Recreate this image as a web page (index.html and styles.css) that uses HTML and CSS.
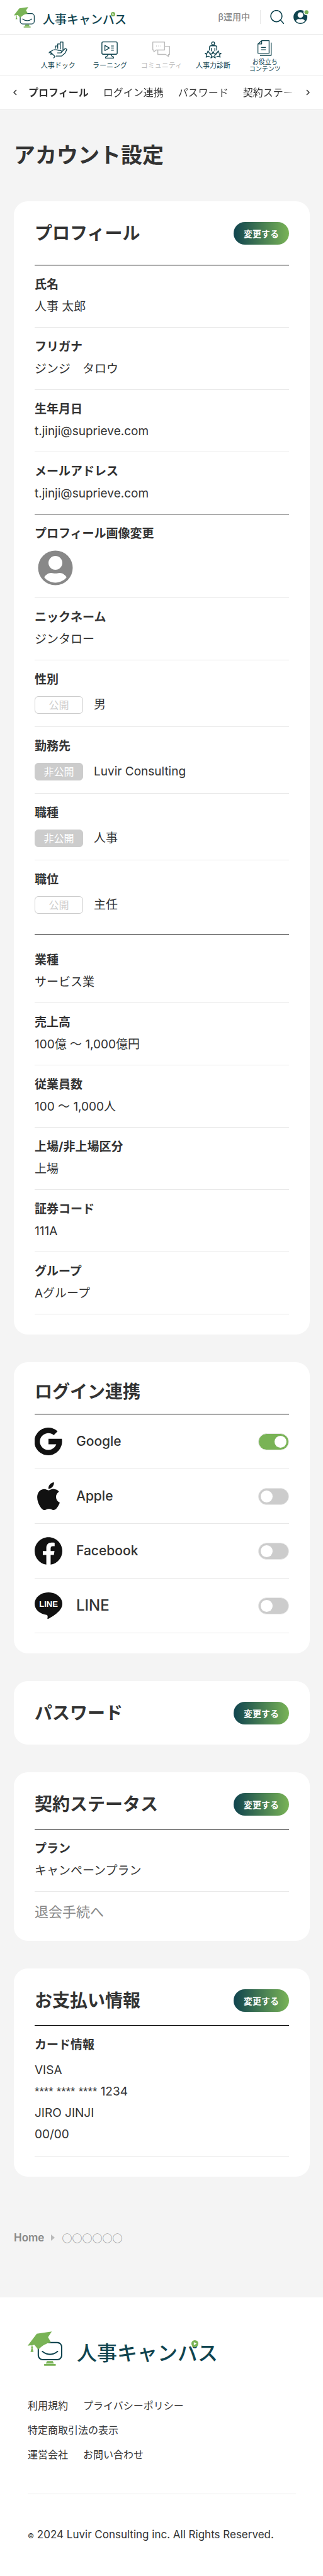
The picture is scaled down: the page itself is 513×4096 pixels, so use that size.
FILE: index.html
```html
<!DOCTYPE html>
<html lang="ja">
<head>
    <meta charset="UTF-8">
    <meta name="viewport" content="width=device-width, initial-scale=1.0">
    <title>アカウント設定 | 人事キャンパス</title>
    <link rel="stylesheet" href="styles.css">
</head>
<body>
    <svg class="defs" aria-hidden="true">
        <symbol id="logo-mark" viewBox="0 0 80 80">
            <rect x="24.5" y="26" width="54" height="39.5" rx="10" fill="none" stroke="#10444f" stroke-width="3"/>
            <path d="M34 46.5Q51.500 60 69 46.500" fill="none" stroke="#10444f" stroke-width="3" stroke-linecap="round"/>
            <path d="M0 33L21 5.300L55.600.500L47 13.300L53.500 25Q37 29 24.500 42L15.400 31.400Z" fill="#79b356"/>
            <path d="M10 31V36" stroke="#79b356" stroke-width="1.500"/>
            <circle cx="10" cy="37" r="2" fill="#79b356"/>
            <path d="M9 38.500H11L13.500 47.500H6.500Z" fill="#79b356"/>
            <path d="M44.600 68.600H58L60.400 74.500H41.700Z" fill="#79b356"/>
            <rect x="37.400" y="75.800" width="27.800" height="3.700" rx="1.800" fill="#79b356"/>
        </symbol>
        <symbol id="play-dot" viewBox="0 0 16 16">
            <circle cx="8" cy="8" r="8" fill="#79b356"/>
            <path d="M5.500 4.500L12 8L5.500 11.500Z" fill="#fff"/>
        </symbol>
        <symbol id="person" viewBox="0 0 24 24">
            <path fill-rule="evenodd" d="M12 2a10 10 0 1 0 0 20a10 10 0 1 0 0-20zM12 5.100a4 4 0 1 1 0 8a4 4 0 1 1 0-8zM5.500 17.400c1-1.500 2.400-2.500 4-2.500c1 0 1.500.300 2.500.300s1.500-.300 2.500-.300c1.600 0 3 1 4 2.500c-1.500 2-3.900 3.100-6.500 3.100s-5-1.100-6.500-3.100z"/>
        </symbol>
    </svg>

    <header class="header">
        <a class="logo" href="#">
            <svg class="logo-mark"><use href="#logo-mark"/></svg>
            <span class="logo-text">人事キャン<span class="logo-pa">パ<svg class="play-dot"><use href="#play-dot"/></svg></span>ス</span>
        </a>
        <div class="header-tools">
            <span class="beta">β運用中</span>
            <button class="icon-btn search-btn" type="button" aria-label="検索">
                <svg viewBox="0 0 32 32" width="22" height="22"><circle cx="14.500" cy="14" r="13" fill="none" stroke="#10444f" stroke-width="2.400"/><path d="M24 23L31 31" stroke="#10444f" stroke-width="2.400" stroke-linecap="round"/></svg>
            </button>
            <button class="icon-btn" type="button" aria-label="アカウント">
                <svg viewBox="0 0 36 32" width="25" height="22">
                    <path fill="#10444f" fill-rule="evenodd" d="M16 0a16 16 0 1 0 0 32a16 16 0 1 0 0-32zM16 5a6.500 6.500 0 1 1 0 13a6.500 6.500 0 1 1 0-13zM5.500 25c2-3 4-4.300 6.500-4.300c2 0 2.500.600 4 .600s2-.600 4-.600c2.500 0 4.500 1.300 6.500 4.300a14 14 0 0 1-21 0z"/>
                    <circle cx="30" cy="5" r="7" fill="#fff"/>
                    <circle cx="30" cy="5" r="4.600" fill="#79b356"/>
                </svg>
            </button>
        </div>
    </header>

    <nav class="main-nav">
        <a class="nav-item" href="#">
            <svg viewBox="0 0 45 40" width="30" height="27"><path d="M16.500 17V10.500H22V5.500H28V1H34.500V21M22 10V17M28 5.500V18M1 27.500C2 25 4 23 7 22.500C10 20 13 18.800 16 19C20 19 23 21 27 21C31 21 32 23.500 31.500 25C31 27 29 27 27 27H21M31.500 24.500L38 18C40 16 44 17 43.500 19.500L39 28L31 34.500H18M3.500 24L15.500 35.500L12 39.500"/><circle cx="6" cy="29.500" r=".8"/></svg>
            <span>人事ドック</span>
        </a>
        <a class="nav-item" href="#">
            <svg viewBox="0 0 38 40" width="26" height="27"><rect x="1" y="1" width="36" height="29" rx="3"/><path d="M8 9L18.500 15.300L8 21.500ZM22.500 10.500H29M22.500 15.300H29M22.500 20.500H29M15.500 30.500C15.500 34 14 35 9.500 36.500V39H28.500V36.500C24 35 22.500 34 22.500 30.500"/></svg>
            <span>ラーニング</span>
        </a>
        <a class="nav-item disabled" href="#">
            <svg viewBox="0 0 42 40" width="28" height="27"><path d="M3 20H1V1H29V20H9L3.500 24.500V20ZM29 11.500H41V30.500H38.500V35.500L31.500 30.500H13V20M9 10.500H10.500M14 10.500H15.500M19.500 10.500H21"/></svg>
            <span>コミュニティ</span>
        </a>
        <a class="nav-item" href="#">
            <svg viewBox="0 0 40 40" width="27" height="27"><circle cx="20" cy="4.500" r="3.500"/><path d="M11.500 21V14Q11.500 10 15 10H25Q28.500 10 28.500 14V21M16 15V23M24 15V23"/><path class="star" d="M20 23.500L22.200 29H28L23.500 32.700L25.200 38.700L20 35.300L14.800 38.700L16.500 32.700L12 29H17.800Z"/><path d="M13.500 27L10.500 26.700L8 22L6 27.500H1L5 31L3.500 37L8 34.500L12.500 36.500M26.500 27L29.500 26.700L32 22L34 27.500H39L35 31L36.500 37L32 34.500L27.500 36.500"/></svg>
            <span>人事力診断</span>
        </a>
        <a class="nav-item two-line" href="#">
            <svg viewBox="0 0 35 38" width="23" height="25"><path d="M10 1H28V31.500H1V9ZM10 1V9H1M8.600 17.300H20M8.600 23H20M33 5.500V36.500H6"/></svg>
            <span>お役立ち<br>コンテンツ</span>
        </a>
    </nav>

    <nav class="tabs">
        <button class="icon-btn" type="button" aria-label="前へ"><svg viewBox="0 0 6 10" width="6" height="10"><path d="M5 1L1 5L5 9"/></svg></button>
        <div class="tab-list">
            <a class="active" href="#profile">プロフィール</a>
            <a href="#login">ログイン連携</a>
            <a href="#password">パスワード</a>
            <a href="#contract">契約ステータス</a>
        </div>
        <button class="icon-btn" type="button" aria-label="次へ"><svg viewBox="0 0 6 10" width="6" height="10"><path d="M1 1L5 5L1 9"/></svg></button>
    </nav>

    <main class="container">
        <h1>アカウント設定</h1>

        <section class="card" id="profile">
            <div class="card-head wide">
                <h2>プロフィール</h2>
                <button class="edit-btn" type="button">変更する</button>
            </div>
            <dl class="rows">
                <div class="row"><dt>氏名</dt><dd>人事 太郎</dd></div>
                <div class="row"><dt>フリガナ</dt><dd>ジンジ　タロウ</dd></div>
                <div class="row"><dt>生年月日</dt><dd>t.jinji@suprieve.com</dd></div>
                <div class="row group-end"><dt>メールアドレス</dt><dd>t.jinji@suprieve.com</dd></div>
                <div class="row avatar-row"><dt>プロフィール画像変更</dt><dd><svg class="avatar" width="66" height="66"><use href="#person"/></svg></dd></div>
                <div class="row"><dt>ニックネーム</dt><dd>ジンタロー</dd></div>
                <div class="row badge-row"><dt>性別</dt><dd><span class="badge">公開</span>男</dd></div>
                <div class="row badge-row"><dt>勤務先</dt><dd><span class="badge private">非公開</span>Luvir Consulting</dd></div>
                <div class="row badge-row"><dt>職種</dt><dd><span class="badge private">非公開</span>人事</dd></div>
                <div class="row badge-row group-end spaced"><dt>職位</dt><dd><span class="badge">公開</span>主任</dd></div>
                <div class="row"><dt>業種</dt><dd>サービス業</dd></div>
                <div class="row"><dt>売上高</dt><dd>100億 〜 1,000億円</dd></div>
                <div class="row"><dt>従業員数</dt><dd>100 〜 1,000人</dd></div>
                <div class="row"><dt>上場/非上場区分</dt><dd>上場</dd></div>
                <div class="row"><dt>証券コード</dt><dd>111A</dd></div>
                <div class="row"><dt>グループ</dt><dd>Aグループ</dd></div>
            </dl>
        </section>

        <section class="card" id="login">
            <div class="card-head">
                <h2>ログイン連携</h2>
            </div>
            <div class="login-row">
                <svg viewBox="0 0 44 44"><path d="M36.500 5.800L30.400 12A13.400 13.400 0 1 0 34.400 26.500H22V17.800H43.200A22 22 0 1 1 36.500 5.800Z"/></svg>
                <label for="sw-google">Google</label>
                <input class="switch" type="checkbox" id="sw-google" checked>
            </div>
            <div class="login-row">
                <svg viewBox="0 0 24 24"><path d="M12.152 6.896c-.948 0-2.415-1.078-3.960-1.040-2.040.027-3.910 1.183-4.961 3.014-2.117 3.675-.546 9.103 1.519 12.090 1.013 1.454 2.208 3.090 3.792 3.039 1.520-.065 2.090-.987 3.935-.987 1.831 0 2.350.987 3.960.948 1.637-.026 2.676-1.480 3.676-2.948 1.156-1.688 1.636-3.325 1.662-3.415-.039-.013-3.182-1.221-3.220-4.857-.026-3.040 2.480-4.494 2.597-4.559-1.429-2.090-3.623-2.324-4.390-2.376-2-.156-3.675 1.090-4.610 1.090zM15.530 3.830c.843-1.012 1.400-2.427 1.245-3.830-1.207.052-2.662.805-3.532 1.818-.780.896-1.454 2.338-1.273 3.714 1.338.104 2.715-.688 3.559-1.701"/></svg>
                <label for="sw-apple">Apple</label>
                <input class="switch" type="checkbox" id="sw-apple">
            </div>
            <div class="login-row">
                <svg viewBox="0 0 24 24"><path d="M24 12.073c0-6.627-5.373-12-12-12s-12 5.373-12 12c0 5.990 4.388 10.954 10.125 11.854v-8.385H7.078v-3.470h3.047V9.430c0-3.007 1.792-4.669 4.533-4.669 1.312 0 2.686.235 2.686.235v2.953H15.830c-1.491 0-1.956.925-1.956 1.874v2.250h3.328l-.532 3.470h-2.796v8.385C19.612 23.027 24 18.062 24 12.073z"/></svg>
                <label for="sw-facebook">Facebook</label>
                <input class="switch" type="checkbox" id="sw-facebook">
            </div>
            <div class="login-row">
                <svg viewBox="0 -1 44 44"><path d="M22 0C34 0 44 8 44 18C44 23 41.500 27 38 30.500C33 35.500 26 40 21.500 42C20.300 42.500 20.200 41.800 20.400 41C20.800 38.500 21 36.500 19 35.800C8.500 34.500 0 27.500 0 18C0 8 10 0 22 0Z"/><text class="line-mark" x="22" y="23" text-anchor="middle">LINE</text></svg>
                <label class="large" for="sw-line">LINE</label>
                <input class="switch" type="checkbox" id="sw-line">
            </div>
        </section>

        <section class="card" id="password">
            <div class="card-head only">
                <h2>パスワード</h2>
                <button class="edit-btn" type="button">変更する</button>
            </div>
        </section>

        <section class="card" id="contract">
            <div class="card-head">
                <h2>契約ステータス</h2>
                <button class="edit-btn" type="button">変更する</button>
            </div>
            <dl class="rows">
                <div class="row"><dt>プラン</dt><dd>キャンペーンプラン</dd></div>
            </dl>
            <a class="leave" href="#">退会手続へ</a>
        </section>

        <section class="card" id="payment">
            <div class="card-head">
                <h2>お支払い情報</h2>
                <button class="edit-btn" type="button">変更する</button>
            </div>
            <dl class="rows">
                <div class="row pay-row"><dt>カード情報</dt><dd>VISA<br><span class="masked">**** **** ****</span> 1234<br>JIRO JINJI<br>00/00</dd></div>
            </dl>
        </section>

        <div class="breadcrumb">
            <a href="#">Home</a>
            <svg viewBox="0 0 6 10" width="6" height="10"><path d="M0 0L6 5L0 10Z" fill="#bbb"/></svg>
            <span>○○○○○○</span>
        </div>
    </main>

    <footer class="footer">
        <a class="logo large" href="#">
            <svg class="logo-mark"><use href="#logo-mark"/></svg>
            <span class="logo-text">人事キャン<span class="logo-pa">パ<svg class="play-dot"><use href="#play-dot"/></svg></span>ス</span>
        </a>
        <ul class="footer-links">
            <li><a href="#">利用規約</a><a href="#">プライバシーポリシー</a></li>
            <li><a href="#">特定商取引法の表示</a></li>
            <li><a href="#">運営会社</a><a href="#">お問い合わせ</a></li>
        </ul>
        <p class="copyright"><small>©</small> 2024 Luvir Consulting inc. All Rights Reserved.</p>
    </footer>
</body>
</html>
```

FILE: styles.css
```css
* {
    box-sizing: border-box;
}
body {
    margin: 0;
    background-color: #f4f4f4;
    color: #333;
    font-family: Inter, "Noto Sans CJK JP", sans-serif;
    font-size: 19px;
    font-weight: 400;
    line-height: 28px;
}
a {
    color: inherit;
    text-decoration: none;
}
svg {
    display: block;
    flex-shrink: 0;
}
h1, h2, dl, dd, ul, p {
    margin: 0;
    padding: 0;
}
.defs {
    display: none;
}
.icon-btn {
    padding: 0;
    border: 0;
    background: none;
}

/* header */
.header {
    display: flex;
    align-items: center;
    justify-content: space-between;
    height: 55px;
    padding: 0 22px;
    background-color: #fff;
    border-bottom: 1px solid #e8e8e8;
}
.logo {
    display: flex;
    align-items: center;
    gap: 13px;
    color: #10444f;
}
.logo-mark {
    width: 33px;
    height: 33px;
}
.logo-text {
    padding-top: 6px;
    font-family: "Noto Sans CJK JP", sans-serif;
    font-size: 19px;
    font-weight: 500;
    line-height: 28px;
}
.logo-pa {
    position: relative;
}
.play-dot {
    position: absolute;
    top: 3px;
    right: -1px;
    width: 7px;
    height: 7px;
}
.header-tools {
    display: flex;
    align-items: center;
    gap: 15px;
}
.beta {
    padding-right: 16px;
    border-right: 1px solid #e8e8e8;
    color: #888;
    font-size: 14px;
    font-weight: 500;
    line-height: 22px;
}

/* main navigation */
.main-nav {
    display: grid;
    grid-template-columns: repeat(5, 1fr);
    height: 65px;
    padding: 0 10%;
    background-color: #fff;
    border-bottom: 1px solid #e8e8e8;
}
.nav-item {
    display: flex;
    flex-direction: column;
    align-items: center;
    gap: 4px;
    padding-top: 11px;
    color: #10444f;
    font-size: 11px;
    line-height: 14px;
    text-align: center;
    white-space: nowrap;
}
.nav-item svg {
    fill: none;
    stroke: currentColor;
    stroke-width: 2;
    stroke-linejoin: round;
}
.nav-item .star {
    fill: #fff;
}
.nav-item.disabled {
    color: #bbb;
}
.nav-item.two-line {
    padding-top: 9px;
    font-size: 10px;
    line-height: 11px;
}

/* tabs */
.tabs {
    display: flex;
    align-items: center;
    height: 55px;
    padding: 0 21px;
    gap: 18px;
    background-color: #fff;
    border-bottom: 1px solid #e8e8e8;
    font-size: 16px;
}
.tabs svg {
    fill: none;
    stroke: #333;
    stroke-width: 1.5;
}
.tab-list {
    display: flex;
    flex: 1;
    gap: 23px;
    overflow: hidden;
    white-space: nowrap;
    mask-image: linear-gradient(to right, #000 calc(100% - 22px), transparent);
}
.tab-list .active {
    font-weight: 700;
}

/* content */
.container {
    display: flex;
    flex-direction: column;
    gap: 44px;
    padding: 0 21px 0 22px;
}
h1 {
    padding-top: 49px;
    margin-bottom: 6px;
    font-size: 34px;
    font-weight: 700;
    line-height: 46px;
}
.card {
    padding: 33px 33px 32px;
    background-color: #fff;
    border-radius: 22px;
}
.card-head {
    display: flex;
    align-items: center;
    justify-content: space-between;
    padding-bottom: 21px;
    border-bottom: 1px solid #000;
}
.card-head.wide {
    padding-bottom: 32px;
}
.card-head.only {
    padding-bottom: 0;
    border-bottom: 0;
}
h2 {
    font-size: 28px;
    font-weight: 700;
    line-height: 28px;
}
.edit-btn {
    width: 88px;
    height: 36px;
    padding: 0;
    border: 0;
    border-radius: 18px;
    background: linear-gradient(to right, #10444f, #79b356);
    color: #fff;
    font-family: inherit;
    font-size: 14px;
    font-weight: 700;
}
.row {
    padding: 17px 0 18px;
    border-bottom: 1px solid #e8e8e8;
}
dt {
    margin-bottom: 7px;
    font-weight: 700;
}
.group-end {
    border-bottom-color: #333;
}
.avatar-row {
    padding-bottom: 14px;
}
.avatar {
    fill: #888;
}
.badge-row {
    padding-bottom: 20px;
}
.badge-row dt {
    margin-bottom: 12px;
}
.badge-row dd {
    display: flex;
    align-items: center;
    gap: 17px;
}
.spaced {
    padding-bottom: 32px;
    margin-bottom: 10px;
}
.badge {
    width: 77px;
    height: 28px;
    border: 1px solid #ccc;
    border-radius: 6px;
    color: #ccc;
    font-size: 16px;
    line-height: 26px;
    text-align: center;
}
.badge.private {
    background-color: #ccc;
    color: #fff;
}

/* login providers */
.login-row {
    display: flex;
    align-items: center;
    gap: 22px;
    padding: 21px 0;
    border-bottom: 1px solid #e8e8e8;
}
.login-row svg {
    width: 44px;
    height: 44px;
    fill: #111;
}
.login-row label {
    flex: 1;
    font-size: 21px;
    font-weight: 500;
}
.login-row label.large {
    font-size: 24px;
}
.line-mark {
    fill: #fff;
    font-family: "Liberation Sans", sans-serif;
    font-size: 13px;
    font-weight: 700;
}
.switch {
    appearance: none;
    display: flex;
    width: 49px;
    height: 27px;
    margin: 0;
    padding: 3px;
    border: 1px solid #e8e8e8;
    border-radius: 14px;
    background-color: #ccc;
}
.switch::before {
    content: "";
    width: 19px;
    height: 19px;
    border-radius: 50%;
    background-color: #fff;
}
.switch:checked {
    justify-content: flex-end;
    background-color: #79b356;
}

/* contract and payment */
.leave {
    display: block;
    padding-top: 18px;
    color: #888;
    font-size: 22px;
}
.pay-row {
    padding-bottom: 17px;
}
.pay-row dt {
    margin-bottom: 9px;
}
.pay-row dd {
    line-height: 34px;
}
.masked {
    font-family: "Liberation Sans", sans-serif;
}
.breadcrumb {
    display: flex;
    align-items: center;
    gap: 11px;
    padding: 39px 0 81px;
    color: #888;
    font-family: "Noto Sans CJK JP", sans-serif;
    font-size: 16px;
}
.breadcrumb a {
    font-family: Inter, sans-serif;
    font-size: 17px;
    font-weight: 600;
}

/* footer */
.footer {
    padding: 54px 43px 50px 44px;
    margin-bottom: 2px;
    background-color: #fff;
    font-size: 16px;
}
.logo.large {
    gap: 23px;
}
.logo.large .logo-mark {
    width: 55px;
    height: 55px;
}
.logo.large .logo-text {
    padding-top: 8px;
    font-size: 32px;
    line-height: 40px;
}
.logo.large .play-dot {
    top: 5px;
    width: 11px;
    height: 11px;
}
.footer-links {
    margin-top: 44px;
    list-style: none;
    line-height: 39px;
}
.footer-links li {
    display: flex;
    gap: 24px;
}
.copyright {
    margin-top: 42px;
    padding-top: 50px;
    border-top: 1px solid #e8e8e8;
    font-size: 17px;
}
.copyright small {
    font-size: 11px;
}
```
